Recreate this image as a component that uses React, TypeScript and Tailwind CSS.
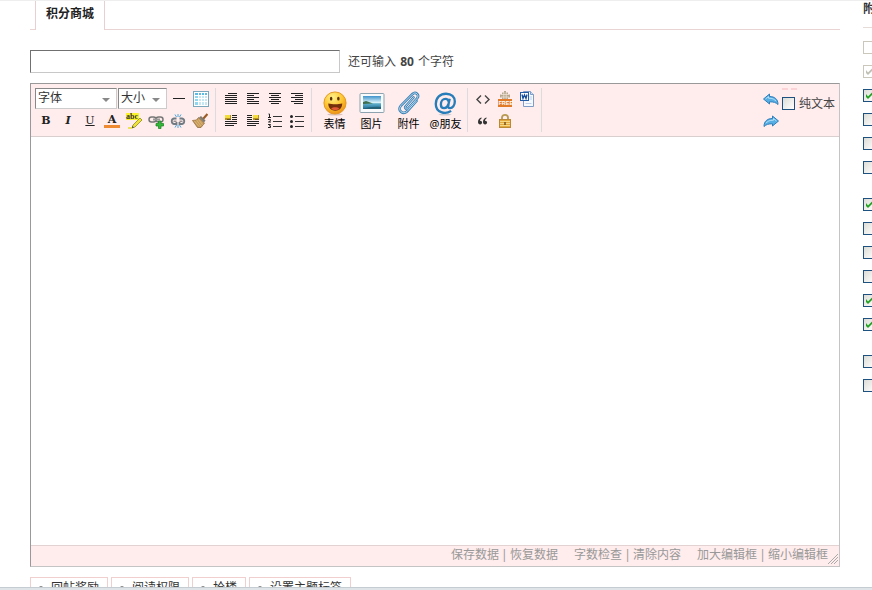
import React from "react";

const svgProps = { width: 16, height: 16, viewBox: "0 0 16 16", fill: "none" };

function LinesIcon({ rows }: { rows: number[][] }) {
  return (
    <svg {...svgProps} shapeRendering="crispEdges">
      {rows.map(([x, w], i) => (
        <rect key={i} x={x} y={2 + i * 2} width={w} height="1" fill="#222" />
      ))}
    </svg>
  );
}

function IndentIcon({ side }: { side: "left" | "right" }) {
  const left = side === "left";
  return (
    <svg {...svgProps} shapeRendering="crispEdges">
      <rect x={left ? 2 : 8} y="2" width="6" height="5" fill="#b8921a" />
      <rect x={left ? 2 : 8} y="2" width="5" height="3" fill="#f4dc3a" />
      <rect x={left ? 4 : 10} y="6" width="4" height="1" fill="#5d5220" />
      {[2, 4, 6].map((y) => (
        <rect key={y} x={left ? 9 : 2} y={y} width="5" height="1" fill="#222" />
      ))}
      {[8, 10, 12].map((y) => (
        <rect key={y} x="2" y={y} width={y === 12 ? 9 : 12} height="1" fill="#222" />
      ))}
    </svg>
  );
}

function OrderedListIcon() {
  return (
    <svg {...svgProps}>
      <path d="M1.5 1h1v3.500M1 4.500h3M1 6.500h2.500v1L1.500 9H4M1 11.500h2.500l-1 1.500h1v1.500H1" stroke="#222" />
      <path d="M6 3.500h9M6 8.500h9M6 13.500h9" stroke="#333" />
    </svg>
  );
}

function BulletListIcon() {
  return (
    <svg {...svgProps}>
      <circle cx="2.500" cy="3.500" r="1.500" fill="#222" />
      <circle cx="2.500" cy="8.500" r="1.500" fill="#222" />
      <circle cx="2.500" cy="13.500" r="1.500" fill="#222" />
      <path d="M6 3.500h9M6 8.500h9M6 13.500h9" stroke="#333" />
    </svg>
  );
}

function TableIcon() {
  return (
    <svg {...svgProps} shapeRendering="crispEdges">
      <rect x="0" y="0" width="16" height="16" fill="#7ba7bd" />
      <rect x="1" y="1" width="14" height="14" fill="#fff" />
      <rect x="2" y="2" width="12" height="2" fill="#5bbbe5" />
      <rect x="2" y="4" width="3" height="10" fill="#8fd6f1" />
      <rect x="5" y="4" width="9" height="10" fill="#c4e6f5" />
      <path d="M2 4.500h12M2 7.500h12M2 10.500h12M5.500 2v12M8.500 2v12M11.500 2v12" stroke="#fff" />
    </svg>
  );
}

function HighlightIcon() {
  return (
    <svg {...svgProps} overflow="visible">
      <rect x="0" y="0" width="13" height="7" fill="#fdf32c" />
      <text x="0" y="6" fontSize="8" fontWeight="bold" fontFamily="Liberation Serif, serif" fill="#333">abc</text>
      <path d="M14 5l2 2-7 7-3 1 1-3z" fill="#efe435" stroke="#8d8a26" strokeWidth="0.800" />
      <path d="M6 15l.500-2 1.500 1.500z" fill="#444" />
      <path d="M2 15h4" stroke="#e8df2a" strokeWidth="1.500" />
    </svg>
  );
}

function LinkIcon() {
  return (
    <svg {...svgProps}>
      <rect x="1" y="4" width="7" height="5" rx="2.500" stroke="#777" strokeWidth="1.500" />
      <rect x="8" y="4" width="7" height="5" rx="2.500" stroke="#777" strokeWidth="1.500" />
      <path d="M5 6.500h7" stroke="#999" strokeWidth="2" />
      <path d="M10.500 8h2.500v2.500h2.500V13H13v2.500h-2.500V13H8v-2.500h2.500z" fill="#35b83a" stroke="#16801d" strokeWidth="0.700" />
    </svg>
  );
}

function UnlinkIcon() {
  return (
    <svg {...svgProps}>
      <path d="M6.500 5.500H4a2.800 2.800 0 000 5.500h2.500V9M9.500 5.500H12a2.800 2.800 0 010 5.500H9.500V9" stroke="#707b83" strokeWidth="1.800" />
      <path d="M3.500 8.200h3M9.500 8.200h3" stroke="#666" />
      <path d="M8 1v3M5 1.500l1.500 2.500M11 1.500L9.500 4M8 12v3M5 14.500L6.500 12M11 14.500L9.500 12" stroke="#4ea6da" />
    </svg>
  );
}

function BroomIcon() {
  return (
    <svg {...svgProps}>
      <path d="M15.500 1L11 6" stroke="#9c5b25" strokeWidth="2.200" />
      <path d="M6.500 4.500l6 5.500L9 14.500H5.500L.500 7.500l4-.500z" fill="#c69a5a" stroke="#896030" strokeWidth="0.700" />
      <path d="M2 7.500l5 6M4.500 7l4.500 6M6.500 6.500l4 5" stroke="#e0bd7b" strokeWidth="0.800" />
      <path d="M7 4.500L9 3l4.500 4.500-1.500 2z" fill="#7d7a72" />
    </svg>
  );
}

function SmileIcon() {
  return (
    <svg width="26" height="26" viewBox="-0.500 -0.500 27 27">
      <defs>
        <radialGradient id="smile" cx="0.400" cy="0.250" r="0.800">
          <stop offset="0" stopColor="#fff18a" />
          <stop offset="0.550" stopColor="#fdc530" />
          <stop offset="1" stopColor="#ea8b13" />
        </radialGradient>
      </defs>
      <ellipse cx="13" cy="25" rx="8" ry="1" fill="#d9c2bb" />
      <circle cx="13" cy="13" r="11.500" fill="url(#smile)" stroke="#e39722" />
      <ellipse cx="9" cy="8.500" rx="1.300" ry="2" fill="#5c3208" />
      <ellipse cx="16.500" cy="8.500" rx="1.300" ry="2" fill="#5c3208" />
      <path d="M6 13.500c4 1 10.500 1 14.500 0 0 5-3.500 7.500-7.200 7.500S6 18.500 6 13.500z" fill="#74300c" />
      <path d="M9 19c2-2 6.500-2 8.500 0-2 2-6.500 2-8.500 0z" fill="#e55a36" />
    </svg>
  );
}

function PictureIcon() {
  return (
    <svg width="26" height="26" viewBox="0 0 26 26">
      <defs>
        <linearGradient id="sky" x2="0" y2="1">
          <stop offset="0" stopColor="#3f93cc" />
          <stop offset="0.500" stopColor="#d8f0f8" />
          <stop offset="0.600" stopColor="#5fadc8" />
          <stop offset="1" stopColor="#1c6e99" />
        </linearGradient>
      </defs>
      <rect x="1" y="3.500" width="24" height="19" rx="1" fill="#f8fafb" stroke="#8da3af" />
      <rect x="4" y="6" width="18" height="13" fill="url(#sky)" />
      <path d="M4 12l3-1 3 1 4 1.500L4 14z" fill="#3d7050" />
      <path d="M4 19c5-2 11-2.500 18-2v2z" fill="#256177" />
    </svg>
  );
}

function ClipIcon() {
  return (
    <svg width="26" height="26" viewBox="0 0 26 26" fill="none" strokeLinecap="round">
      <path d="M17.500 7.500l-8 9c-1 1.500 1 3.500 2.500 2l9-10c3-3.500-1.500-7.500-4.500-4.500L5 15.500c-4 5 2 9.500 6 6l9.500-10.500" stroke="#3c81b4" strokeWidth="2.600" />
      <path d="M17.500 7.500l-8 9c-1 1.500 1 3.500 2.500 2l9-10c3-3.500-1.500-7.500-4.500-4.500L5 15.500c-4 5 2 9.500 6 6l9.500-10.500" stroke="#b9dcf2" strokeWidth="1" />
    </svg>
  );
}

function AtIcon() {
  return (
    <svg width="26" height="26" viewBox="0 -1 28 28" fill="none">
      <ellipse cx="13" cy="25.500" rx="7" ry="1" fill="#c9c9d2" />
      <path d="M19.500 21.500C13 26 3 23 3 14 3 7 8 3 14 3c6 0 9.500 3.500 9.500 8.500 0 4-2.500 7-5 7-2 0-2.500-1.500-2-3.500L18 8.500" stroke="#267db9" strokeWidth="2.500" />
      <path d="M17 11.500c-.500-2-1.500-3-3.500-3-3 0-5 3-5 6 0 2.500 1.500 4 3.500 4 2.500 0 4-2 4.500-4" stroke="#267db9" strokeWidth="2.500" />
    </svg>
  );
}

function CodeIcon() {
  return (
    <svg {...svgProps}>
      <path d="M6 4.500L2 8.500l4 4M10 4.500l4 4-4 4" stroke="#444" strokeWidth="1.400" />
    </svg>
  );
}

function FreeIcon() {
  return (
    <svg {...svgProps}>
      <path d="M5 1.500h2V0h2v1.500h2v2h2v3h-2V9H5V6.500H3v-3h2z" fill="#b5a88f" />
      <path d="M4 3.500h8M4 6h8M6.800 1v7M9.200 1v7" stroke="#f3e6dc" strokeWidth="0.700" />
      <rect x="1" y="8" width="14" height="8" fill="#e17b27" />
      <text x="1.500" y="14" fontSize="5.500" fontWeight="bold" fontFamily="Liberation Sans, sans-serif" fill="#fff">FREE</text>
    </svg>
  );
}

function WordIcon() {
  return (
    <svg {...svgProps}>
      <path d="M4.500.500h7l3 3v12h-10z" fill="#f5f9fe" stroke="#7e9cc5" />
      <path d="M11.500.500v3h3" fill="#c9daf0" stroke="#7e9cc5" />
      <path d="M10.500 6h2.500M10.500 8h2.500M6.500 12.500h6" stroke="#bccde5" />
      <rect x="1.500" y="1.500" width="8" height="8" fill="#fff" stroke="#265ca5" />
      <path d="M3 3.500l1 4 1.500-3.500 1.500 3.500 1-4" stroke="#174c99" strokeWidth="1.300" />
    </svg>
  );
}

function QuoteIcon() {
  return (
    <svg {...svgProps}>
      <path d="M6.500 4.500C4.500 5 3 6.500 3 9c0 1.500.800 2.500 2.200 2.500 1.100 0 1.900-.800 1.900-1.900S6.300 7.800 5 7.800c.200-1.300.700-2 1.700-2.500zM11.500 4.500C9.500 5 8 6.500 8 9c0 1.500.800 2.500 2.200 2.500 1.100 0 1.900-.800 1.900-1.900s-.800-1.800-2.100-1.800c.200-1.300.700-2 1.700-2.500z" fill="#333" />
    </svg>
  );
}

function LockIcon() {
  return (
    <svg {...svgProps}>
      <path d="M5 8V4.500c0-3.500 6-3.500 6 0V8" stroke="#b89a52" strokeWidth="1.800" />
      <rect x="2.500" y="6.500" width="11" height="8" fill="#e3a93f" stroke="#b98a35" />
      <path d="M3 8.500h10M3 10.500h10M3 12.500h10" stroke="#f6d985" />
      <path d="M8 9v3" stroke="#765019" strokeWidth="1.500" />
    </svg>
  );
}

function ArrowIcon({ flip = false }: { flip?: boolean }) {
  return (
    <svg {...svgProps} className={flip ? "-scale-x-100" : ""}>
      <path d="M.500 8L6.500 3v2.500c5 0 8.500 2.500 8.500 8-2-2-4.500-2.700-8.500-2.700V13z" fill="#56aee3" stroke="#2f7fbc" />
      <path d="M2.500 8l3-2.500v1.700c4 0 6 1 7.500 3" stroke="#b5e0f7" />
    </svg>
  );
}

function ToolButton({ title, children }: { title: string; children: React.ReactNode }) {
  return (
    <button type="button" aria-label={title} className="flex h-[22px] w-[22px] items-center justify-center">
      {children}
    </button>
  );
}

function BigButton({ icon, label }: { icon: React.ReactNode; label: string }) {
  return (
    <button type="button" className="flex w-[37px] flex-col items-center whitespace-nowrap pt-0.5 text-[11px] leading-4 text-black">
      {icon}
      {label}
    </button>
  );
}

function ToolSelect({ label, className }: { label: string; className: string }) {
  return (
    <div className={`relative h-[21px] ${className}`}>
      <select aria-label={label} className="h-full w-full appearance-none border border-t-[#888] border-r-[#ccc] border-b-[#ccc] border-l-[#888] bg-white pb-0.5 pl-0.5 text-[12px] leading-4 text-[#333]">
        <option>{label}</option>
      </select>
      <svg width="8" height="4" viewBox="0 0 8 4" className="pointer-events-none absolute right-[7px] bottom-[7px]">
        <path d="M0 0h8L4 4z" fill="#888" />
      </svg>
    </div>
  );
}

function Checkbox({ id, label, checked = false, disabled = false }: { id?: string; label?: string; checked?: boolean; disabled?: boolean }) {
  return (
    <span className="grid h-[13px] w-[13px] shrink-0">
      <input
        id={id}
        type="checkbox"
        aria-label={label}
        defaultChecked={checked}
        disabled={disabled}
        className="peer col-start-1 row-start-1 h-[13px] w-[13px] appearance-none border border-[#1c5180] bg-linear-to-br from-[#dcdcd7] to-white disabled:border-[#cac8bb] disabled:from-white"
      />
      <svg width="13" height="13" viewBox="0 0 13 13" className="pointer-events-none col-start-1 row-start-1 hidden text-[#21a121] peer-checked:block peer-disabled:text-[#bfbfb5]">
        <path d="M3 5v3l2 2 5-5V2.500L5 7.500z" fill="currentColor" />
      </svg>
    </span>
  );
}

const alignIcons = [
  { title: "自动排版", rows: [[5, 9], [2, 12], [2, 12], [2, 12], [2, 12], [2, 12]] },
  { title: "居左", rows: [[2, 12], [2, 7], [2, 12], [2, 7], [2, 12], [2, 12]] },
  { title: "居中", rows: [[2, 12], [4, 8], [2, 12], [4, 8], [2, 12], [4, 8]] },
  { title: "居右", rows: [[2, 12], [6, 8], [2, 12], [6, 8], [2, 12], [5, 9]] },
];

const sideOptions = [
  [
    { disabled: true },
    { disabled: true, checked: true },
    { checked: true },
    {},
    {},
    {},
  ],
  [{ checked: true }, {}, {}, {}, { checked: true }, { checked: true }],
  [{}, {}],
];

const footerLinks = [
  ["保存数据", "恢复数据"],
  ["字数检查", "清除内容"],
  ["加大编辑框", "缩小编辑框"],
];

const extraTabs = ["回帖奖励", "阅读权限", "抢楼", "设置主题标签"];

function Toolbar() {
  return (
    <div className="flex shrink-0 border-b border-[#d9cfcf] bg-[#ffecec] py-1 pl-1">
      <div className="border-r border-[#dcdcdc] pr-[3px]">
        <div className="flex gap-px">
          <ToolSelect label="字体" className="w-[82px]" />
          <ToolSelect label="大小" className="w-[49px]" />
          <div className="flex">
            <ToolButton title="分隔线">
              <svg {...svgProps}><path d="M2 7.500h12" stroke="#222" /></svg>
            </ToolButton>
            <ToolButton title="表格"><TableIcon /></ToolButton>
          </div>
        </div>
        <div className="flex font-['DejaVu_Serif',serif] text-[11px] leading-4 text-[#222]">
          <ToolButton title="粗体"><b>B</b></ToolButton>
          <ToolButton title="斜体"><b><i>I</i></b></ToolButton>
          <ToolButton title="下划线"><u>U</u></ToolButton>
          <ToolButton title="文字颜色">
            <span className="w-4 border-b-[3px] border-[#ee8a32] text-center leading-[11px] font-bold">A</span>
          </ToolButton>
          <ToolButton title="背景色"><HighlightIcon /></ToolButton>
          <ToolButton title="链接"><LinkIcon /></ToolButton>
          <ToolButton title="移除链接"><UnlinkIcon /></ToolButton>
          <ToolButton title="清除格式"><BroomIcon /></ToolButton>
        </div>
      </div>

      <div className="border-r border-[#dcdcdc] pr-[3px] pl-1">
        <div className="flex">
          {alignIcons.map((a) => (
            <ToolButton key={a.title} title={a.title}><LinesIcon rows={a.rows} /></ToolButton>
          ))}
        </div>
        <div className="flex">
          <ToolButton title="左浮动"><IndentIcon side="left" /></ToolButton>
          <ToolButton title="右浮动"><IndentIcon side="right" /></ToolButton>
          <ToolButton title="有序列表"><OrderedListIcon /></ToolButton>
          <ToolButton title="无序列表"><BulletListIcon /></ToolButton>
        </div>
      </div>

      <div className="flex border-r border-[#dcdcdc] pr-[3px] pl-1">
        <BigButton icon={<SmileIcon />} label="表情" />
        <BigButton icon={<PictureIcon />} label="图片" />
        <BigButton icon={<ClipIcon />} label="附件" />
        <BigButton icon={<AtIcon />} label="@朋友" />
      </div>

      <div className="border-r border-[#dcdcdc] pr-[3px] pl-1">
        <div className="flex">
          <ToolButton title="代码"><CodeIcon /></ToolButton>
          <ToolButton title="免费信息"><FreeIcon /></ToolButton>
          <ToolButton title="Word"><WordIcon /></ToolButton>
        </div>
        <div className="flex">
          <ToolButton title="引用"><QuoteIcon /></ToolButton>
          <ToolButton title="隐藏内容"><LockIcon /></ToolButton>
        </div>
      </div>

      <div className="ml-auto flex pr-1">
        <div>
          <ToolButton title="撤销"><ArrowIcon /></ToolButton>
          <ToolButton title="重做"><ArrowIcon flip /></ToolButton>
        </div>
        <div>
          <div className="flex gap-[3px] pb-[7px]">
            <span className="h-0.5 w-1.5 bg-[#fbd3d6]" />
            <span className="h-0.5 w-1.5 bg-[#fbd3d6]" />
          </div>
          <div className="flex items-center gap-1 text-[12px] leading-[13px]">
            <Checkbox id="plain" />
            <label htmlFor="plain">纯文本</label>
          </div>
        </div>
      </div>
    </div>
  );
}

export default function App() {
  return (
    <div className="flex h-screen flex-col overflow-hidden border-t border-[#eee] bg-white font-['Noto_Sans','Noto_Sans_CJK_SC',sans-serif] text-[12px] leading-4 text-[#444]">
      <div className="flex min-h-0 flex-1">
        <main className="flex min-w-0 flex-1 flex-col pl-[30px]">
          <nav className="flex shrink-0">
            <span className="w-[5px] border-b border-[#e9d3d3]" />
            <a href="#" className="border-x border-[#e9cfcf] px-[10px] pt-[5px] pb-2 font-bold text-[#222]">积分商城</a>
            <span className="flex-1 border-b border-[#e9d3d3]" />
          </nav>

          <div className="mt-5 flex shrink-0 items-center gap-2">
            <input
              id="subject"
              type="text"
              className="h-[23px] w-[310px] border border-t-[#707070] border-r-[#c8c8c8] border-b-[#c8c8c8] border-l-[#707070] bg-white px-1 outline-none"
            />
            <label htmlFor="subject">还可输入 <b className="mx-px">80</b> 个字符</label>
          </div>

          <div className="mt-[10px] flex min-h-0 flex-1 flex-col border border-t-[#999] border-r-[#c4c4c4] border-b-[#c4c4c4] border-l-[#999]">
            <Toolbar />
            <textarea aria-label="内容" className="min-h-0 w-full flex-1 resize-none p-2 outline-none" />
            <div className="relative flex shrink-0 justify-end gap-4 border-t border-[#e2d2d2] bg-[#ffecec] pt-px pr-[11px] pb-[3px] text-[#999]">
              {footerLinks.map(([a, b]) => (
                <div key={a} className="flex">
                  <a href="#">{a}</a>
                  <span className="w-[11px] text-center">|</span>
                  <a href="#">{b}</a>
                </div>
              ))}
              <svg width="12" height="12" viewBox="0 0 12 12" className="absolute right-0 bottom-px">
                <path d="M1 11L11 1M4 11l7-7M7 11l4-4" stroke="#aaa" />
              </svg>
            </div>
          </div>

          <div className="mt-[10px] flex h-[10px] shrink-0 gap-[3px] overflow-hidden">
            {extraTabs.map((t) => (
              <button key={t} type="button" className="flex h-6 shrink-0 gap-[6px] border border-[#f2cfcf] pt-0.5 pr-2 pl-[6px] text-[#333]">
                <svg width="8" height="16" viewBox="0 0 8 16" className="shrink-0">
                  <circle cx="4" cy="8" r="2" fill="#888" />
                </svg>
                {t}
              </button>
            ))}
          </div>
        </main>

        <aside className="w-8 shrink-0 overflow-hidden pl-[23px]">
          <h2 className="h-[27px] w-3 border-b border-[#e5dcd8] font-bold text-[#333]">附</h2>
          <div className="flex flex-col gap-6 pt-[13px]">
            {sideOptions.map((group, g) => (
              <div key={g} className="flex flex-col gap-[11px]">
                {group.map((o, i) => (
                  <Checkbox key={i} label={`选项 ${g + 1}-${i + 1}`} {...o} />
                ))}
              </div>
            ))}
          </div>
        </aside>
      </div>
      <div className="h-[3px] shrink-0 border-t border-[#c5cdd3] bg-[#dfe4e9]" />
    </div>
  );
}
